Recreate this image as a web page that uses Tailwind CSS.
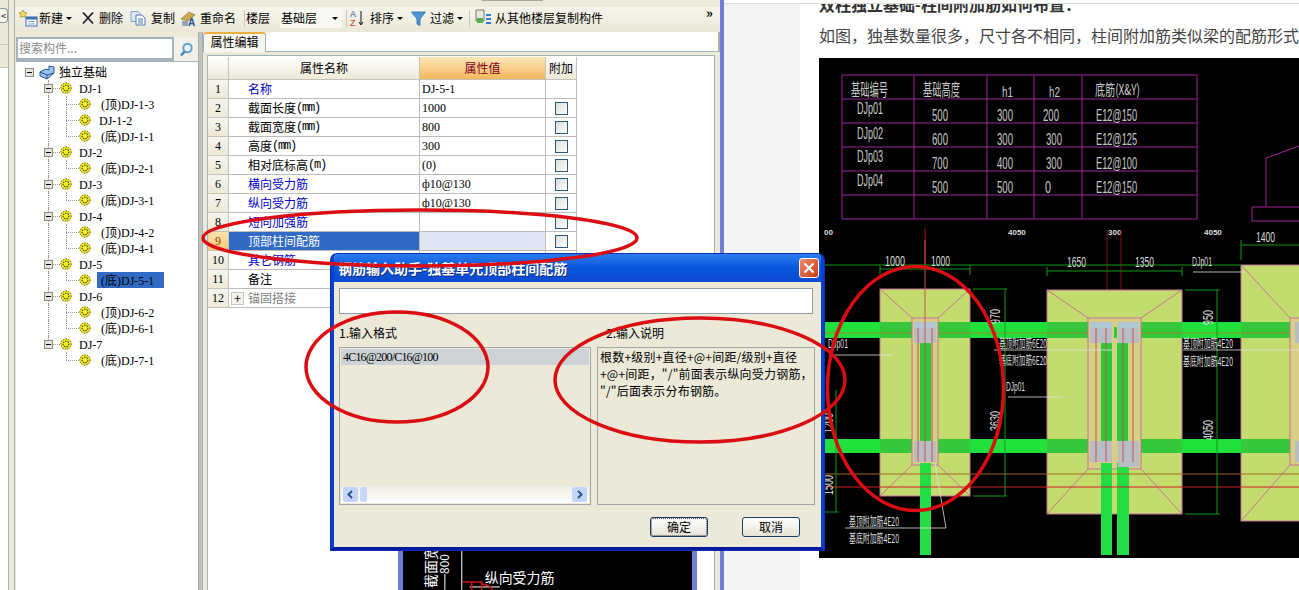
<!DOCTYPE html>
<html lang="zh-CN">

<head>
    <meta charset="UTF-8">
    <title>钢筋输入助手</title>
    <script src="https://cdn.jsdelivr.net/npm/@tailwindcss/browser@4"></script>
</head>

<body>
    <svg width="0" height="0" class="absolute">
        <symbol id="gear" viewBox="0 0 12 12">
            <circle cx="6" cy="6" r="5.500" fill="#f4ec1e" />
            <circle cx="6" cy="6" r="5.200" fill="none" stroke="#55501a" stroke-width="1" stroke-dasharray="1.300 1.300" />
            <circle cx="6" cy="6" r="2.900" fill="none" stroke="#4a4618" stroke-width="1.100" stroke-dasharray="1.500 1" />
        </symbol>
    </svg>

    <div class="relative flex h-[590px] w-[1299px] overflow-hidden bg-white text-[12px] leading-4 text-black font-['Noto_Sans_CJK_SC','Liberation_Sans',sans-serif]">

        <!-- app window -->
        <div class="flex h-full w-[724px] shrink-0 border-r-4 border-[#6d80d6] bg-[#ece9d8]">
            <!-- left rail -->
            <div class="flex w-[15px] shrink-0">
                <div class="flex w-[9px] flex-col border-r border-[#a5aeb4]">
                    <div class="h-[8px]"></div>
                    <div class="flex h-[15px] items-center justify-center rounded-r-sm border border-l-0 border-[#8b9aa3] bg-[#f5f3ea] text-[9px]">&lt;</div>
                    <div class="h-[22px] border-b border-[#c9c6b6]"></div>
                    <div class="h-[23px] border-b border-[#c9c6b6]"></div>
                    <div class="flex-1 bg-white"></div>
                </div>
                <div class="flex-1 border-r border-[#a5aeb4]"></div>
            </div>

            <!-- main column -->
            <div class="flex min-w-0 flex-1 flex-col">
                <div class="relative h-[7px] shrink-0">
                    <div class="absolute left-[467px] top-0 h-px w-[61px] bg-[#a8a698]"></div>
                </div>

                <!-- toolbar -->
                <div class="relative flex h-[25px] shrink-0 items-center bg-gradient-to-b from-[#f7f5ec] to-[#ebe8d8] pb-[3px] pl-[2px]">
                    <svg class="ml-[1px] h-[18px] w-[20px]" viewBox="0 0 20 18">
                        <path d="M5 1l1.300 2.400L9 4 7 6l.5 2.500L5 7.300 2.500 8.500 3 6 1 4l2.700-.6z" fill="#f5df5c" stroke="#a08c2c" stroke-width=".8" />
                        <rect x="8" y="8" width="11" height="9" fill="#fff" stroke="#3d6fb5" />
                        <rect x="8" y="8" width="11" height="2.500" fill="#3d6fb5" />
                        <path d="M10 12.500h7M10 15h7" stroke="#7ea3d4" />
                    </svg>
                    <span class="ml-[1px] w-[24px]">新建</span>
                    <span class="ml-[3px] mt-[1px] h-0 w-0 border-x-[3px] border-t-[3px] border-x-transparent border-t-black"></span>
                    <svg class="ml-[9px] h-[14px] w-[14px]" viewBox="0 0 14 14">
                        <path d="M2 1.500l10 11M12 1.500l-10 11" stroke="#222" stroke-width="1.800" />
                    </svg>
                    <span class="ml-[4px] w-[24px]">删除</span>
                    <svg class="ml-[7px] h-[16px] w-[16px]" viewBox="0 0 16 16">
                        <path d="M1 1.500h7l2 2v8H1z" fill="#dfe9f7" stroke="#7c9fce" />
                        <path d="M6 5h6l3 3v7H6z" fill="#fff" stroke="#4c78b6" />
                        <path d="M8 9h5M8 11h5M8 13h5" stroke="#4c78b6" />
                    </svg>
                    <span class="ml-[5px] w-[24px]">复制</span>
                    <svg class="ml-[5px] h-[17px] w-[17px]" viewBox="0 0 17 17">
                        <path d="M1 9l8-7 6 3-7 6z" fill="#c9a94a" stroke="#7e7a58" stroke-width=".7" />
                        <path d="M2 11h6v5H2z" fill="#8fa5bb" />
                        <text x="8" y="16" font-size="10" font-weight="700" fill="#1f4e96" class="font-['Liberation_Sans']">A</text>
                    </svg>
                    <span class="ml-[3px] w-[36px]">重命名</span>
                    <span class="ml-[8px] h-[17px] w-px bg-[#c9c6b6]"></span>
                    <span class="ml-[1px] w-[24px]">楼层</span>
                    <div class="ml-[10px] flex h-[20px] w-[62px] items-center bg-[#f9f8f2] pl-[1px]">
                        <span class="w-[36px]">基础层</span>
                        <span class="ml-[15px] mt-[1px] h-0 w-0 border-x-[3px] border-t-[3px] border-x-transparent border-t-black"></span>
                    </div>
                    <span class="ml-[4px] h-[17px] w-px bg-[#c9c6b6]"></span>
                    <svg class="ml-[3px] h-[18px] w-[15px]" viewBox="0 0 15 18">
                        <text x="0" y="8" font-size="9" fill="#2a55a8" class="font-['Liberation_Sans']">A</text>
                        <text x="0" y="17" font-size="9" fill="#c8392b" class="font-['Liberation_Sans']">Z</text>
                        <path d="M11 2v13M9 13l2 3 2-3" stroke="#111" fill="none" />
                    </svg>
                    <span class="ml-[5px] w-[24px]">排序</span>
                    <span class="ml-[3px] mt-[1px] h-0 w-0 border-x-[3px] border-t-[3px] border-x-transparent border-t-black"></span>
                    <svg class="ml-[8px] h-[15px] w-[15px]" viewBox="0 0 15 15">
                        <path d="M.5 1h14L9 8v6.500L6 13V8z" fill="#4f96d8" stroke="#2c6aa8" stroke-width=".8" />
                    </svg>
                    <span class="ml-[4px] w-[24px]">过滤</span>
                    <span class="ml-[3px] mt-[1px] h-0 w-0 border-x-[3px] border-t-[3px] border-x-transparent border-t-black"></span>
                    <span class="ml-[6px] h-[17px] w-px bg-[#c9c6b6]"></span>
                    <svg class="ml-[5px] h-[18px] w-[17px]" viewBox="0 0 17 18">
                        <path d="M1 1h8v11H1z" fill="#e9e7d8" stroke="#777" />
                        <path d="M2 9h6v5H2z" fill="#4fb54f" />
                        <path d="M11 5h5v2h-5zM11 9h5v2h-5zM11 13h5v2h-5z" fill="#2f7fd0" />
                    </svg>
                    <span class="ml-[3px]">从其他楼层复制构件</span>
                    <span class="absolute left-[691px] -top-[2px] text-[13px] font-bold leading-4">»</span>
                </div>

                <!-- panels -->
                <div class="flex min-h-0 flex-1">
                    <!-- tree column -->
                    <div class="flex w-[183px] shrink-0 flex-col pl-px pt-[5px]">
                        <div class="flex h-[24px] shrink-0">
                            <div class="flex w-[158px] items-center border-2 border-b-[3px] border-[#a3b3bd] bg-white pb-[2px] pl-[1px] text-[#8b8b8b]">搜索构件...</div>
                            <div class="flex flex-1 items-center justify-center bg-[#f3f1e7]">
                                <svg class="h-[15px] w-[15px]" viewBox="0 0 15 15">
                                    <circle cx="8.500" cy="6" r="4.200" fill="#eef6fc" stroke="#5da0d4" stroke-width="2" />
                                    <path d="M5.500 9.500L2 13.500" stroke="#3f83bb" stroke-width="2.500" />
                                </svg>
                            </div>
                        </div>
                        <div id="tree" class="min-h-0 flex-1 border-t border-[#a3b3bd] bg-white pt-[2px]"></div>
                    </div>
                    <!-- splitter -->
                    <div class="w-[5px] shrink-0 border-x border-[#a5aeb4] bg-[#bfc3bd]"></div>

                    <!-- property column -->
                    <div class="flex min-w-0 flex-1 flex-col">
                        <div class="flex h-[20px] shrink-0 bg-white">
                            <div class="flex h-[20px] w-[63px] items-center justify-center rounded-t-[3px] border border-b-0 border-x-[#a3b3bd] border-t-2 border-t-[#f0b040] bg-[#f6f5ee] pb-[2px]">属性编辑</div>
                            <div class="flex-1 border-b border-r-2 border-[#a3b3bd] border-r-[#aeb0a6]"></div>
                        </div>
                        <div class="flex min-h-0 flex-1 pl-[4px] pr-[5px]">
                            <div class="mt-[3px] flex-1 border border-b-0 border-x-[#9fb0bb] border-t-[#9fb0bb] bg-white pt-px">
                                <div id="grid" class="grid w-[369px] grid-cols-[21px_191px_126px_31px]"></div>
                            </div>
                        </div>
                    </div>
                </div>
            </div>
        </div>

        <!-- gutter -->
        <div class="flex w-[76px] shrink-0 flex-col bg-[#f1f3f4]">
            <div class="h-[3px] bg-white"></div>
            <div class="h-px bg-[#dddddd]"></div>
        </div>

        <!-- article -->
        <div class="flex min-w-0 flex-1 flex-col">
            <div class="h-[3px] shrink-0"></div>
            <div class="h-px shrink-0 bg-[#dddddd]"></div>
            <div class="h-[19px] shrink-0 overflow-hidden pl-[19px]">
                <div class="-mt-[8px] whitespace-nowrap text-[16px] font-bold leading-4 text-[#333]">双柱独立基础-柱间附加筋如何布置：</div>
            </div>
            <div class="h-[24px] shrink-0 whitespace-nowrap pl-[19px] text-[16px] leading-6 text-[#444]">如图，独基数量很多，尺寸各不相同，柱间附加筋类似梁的配筋形式</div>
            <div class="mt-[11px] pl-[19px]">
                <!-- the CAD drawing is a raster in the original, drawn here in page coordinates -->
                <svg class="block h-[500px] w-[480px] bg-black font-['Liberation_Sans','Noto_Sans_CJK_SC',sans-serif]" viewBox="819 58 480 500">
                    <g fill="none" stroke="#a0209a">
                        <path d="M842 75h355M842 99h355M842 123h355M842 147h355M842 171h355M842 195h355M842 219h355" />
                        <path d="M842 75v144M914 75v144M987 75v144M1034 75v144M1082 75v144M1197 75v144" />
                    </g>
                    <g fill="#c8c8c8" font-size="16">
                        <text x="851" y="96" font-size="17" textLength="37" lengthAdjust="spacingAndGlyphs" class="font-['Noto_Sans_CJK_SC']">基础编号</text>
                        <text x="923" y="96" font-size="17" textLength="37" lengthAdjust="spacingAndGlyphs" class="font-['Noto_Sans_CJK_SC']">基础高度</text>
                        <text x="1002" y="97" font-size="14" textLength="11" lengthAdjust="spacingAndGlyphs">h1</text>
                        <text x="1049" y="97" font-size="14" textLength="11" lengthAdjust="spacingAndGlyphs">h2</text>
                        <text x="1095" y="95" font-size="15" textLength="45" lengthAdjust="spacingAndGlyphs" class="font-['Noto_Sans_CJK_SC']">底筋(X&amp;Y)</text>
                        <text x="857" y="114" textLength="26" lengthAdjust="spacingAndGlyphs">DJp01</text>
                        <text x="857" y="139" textLength="26" lengthAdjust="spacingAndGlyphs">DJp02</text>
                        <text x="857" y="162" textLength="26" lengthAdjust="spacingAndGlyphs">DJp03</text>
                        <text x="857" y="186" textLength="26" lengthAdjust="spacingAndGlyphs">DJp04</text>
                        <text x="932" y="121" textLength="16" lengthAdjust="spacingAndGlyphs">500</text>
                        <text x="932" y="145" textLength="16" lengthAdjust="spacingAndGlyphs">600</text>
                        <text x="932" y="169" textLength="16" lengthAdjust="spacingAndGlyphs">700</text>
                        <text x="932" y="193" textLength="16" lengthAdjust="spacingAndGlyphs">500</text>
                        <text x="997" y="121" textLength="16" lengthAdjust="spacingAndGlyphs">300</text>
                        <text x="997" y="145" textLength="16" lengthAdjust="spacingAndGlyphs">300</text>
                        <text x="997" y="169" textLength="16" lengthAdjust="spacingAndGlyphs">400</text>
                        <text x="997" y="193" textLength="16" lengthAdjust="spacingAndGlyphs">500</text>
                        <text x="1043" y="121" textLength="16" lengthAdjust="spacingAndGlyphs">200</text>
                        <text x="1046" y="145" textLength="16" lengthAdjust="spacingAndGlyphs">300</text>
                        <text x="1046" y="169" textLength="16" lengthAdjust="spacingAndGlyphs">300</text>
                        <text x="1045" y="193" textLength="6" lengthAdjust="spacingAndGlyphs">0</text>
                        <text x="1096" y="121" textLength="41" lengthAdjust="spacingAndGlyphs">E12@150</text>
                        <text x="1096" y="145" textLength="41" lengthAdjust="spacingAndGlyphs">E12@125</text>
                        <text x="1096" y="169" textLength="41" lengthAdjust="spacingAndGlyphs">E12@100</text>
                        <text x="1096" y="193" textLength="41" lengthAdjust="spacingAndGlyphs">E12@150</text>
                    </g>

                    <!-- elevation top right -->
                    <path d="M1299 146l-33 12v48M1299 207h-47v14h47" fill="none" stroke="#a0209a" />

                    <!-- dimension row -->
                    <g fill="#dddddd" font-size="8" font-weight="700">
                        <text x="824" y="235">00</text>
                        <text x="1008" y="235">4050</text>
                        <text x="1108" y="235">300</text>
                        <text x="1204" y="235">4050</text>
                    </g>
                    <path d="M925 228v36" stroke="#b01020" />
                    <path d="M1107 230v90" stroke="#7a1410" />
                    <path d="M1121 230v90" stroke="#7a1410" />

                    <!-- footings -->
                    <g fill="#c3dc6e" stroke="#c8709a">
                        <rect x="880" y="289" width="90" height="207" />
                        <rect x="1047" y="290" width="135" height="224" />
                        <rect x="1241" y="265" width="70" height="256" />
                    </g>

                    <!-- long bars -->
                    <rect x="825" y="322" width="474" height="16" fill="#22e03c" />
                    <rect x="825" y="439" width="474" height="14" fill="#22e03c" />
                    <g fill="#35c83c">
                        <rect x="880" y="322" width="90" height="16" />
                        <rect x="880" y="439" width="90" height="14" />
                        <rect x="1047" y="322" width="135" height="16" />
                        <rect x="1047" y="439" width="135" height="14" />
                        <rect x="1241" y="322" width="58" height="16" />
                        <rect x="1241" y="439" width="58" height="14" />
                    </g>
                    <path d="M825 333h474" stroke="#8a9020" />

                    <!-- pedestals -->
                    <g fill="#d6cf84" stroke="#c8709a">
                        <rect x="912" y="318" width="26" height="147" />
                        <rect x="1088" y="318" width="53" height="151" />
                        <rect x="1290" y="318" width="20" height="147" />
                    </g>
                    <path d="M880 289l32 29M970 289l-32 29M880 496l32-31M970 496l-32-31M1047 290l41 28M1182 290l-41 28M1047 514l41-45M1182 514l-41-45M1241 265l49 53M1241 521l49-56" stroke="#c8709a" fill="none" />

                    <!-- column bars -->
                    <g fill="#2bc83a">
                        <rect x="920" y="343" width="11" height="98" />
                        <rect x="1101" y="343" width="11" height="98" />
                        <rect x="1117" y="343" width="11" height="98" />
                        <rect x="1114" y="327" width="3" height="11" />
                    </g>
                    <g fill="#22dd44">
                        <rect x="920" y="463" width="11" height="92" />
                        <rect x="1101" y="463" width="11" height="92" />
                        <rect x="1117" y="463" width="12" height="92" />
                    </g>

                    <!-- column sections -->
                    <g fill="#b8bcc4">
                        <rect x="914" y="322" width="22" height="21" />
                        <rect x="914" y="441" width="22" height="21" />
                        <rect x="1090" y="322" width="22" height="21" />
                        <rect x="1118" y="322" width="21" height="21" />
                        <rect x="1090" y="441" width="22" height="21" />
                        <rect x="1118" y="441" width="21" height="26" />
                        <rect x="1295" y="322" width="4" height="21" />
                        <rect x="1295" y="441" width="4" height="21" />
                    </g>
                    <g fill="#b0c8d4">
                        <rect x="914" y="323" width="22" height="5" />
                        <rect x="1090" y="323" width="22" height="5" />
                        <rect x="1118" y="323" width="21" height="5" />
                    </g>
                    <path d="M918 328v134M925 240v222M932 328v134M1096 328v134M1106 328v134M1123 328v134M1133 328v134" stroke="#c85050" fill="none" />

                    <!-- axis lines -->
                    <path d="M825 474h474" stroke="#a06a20" />
                    <path d="M825 487h474" stroke="#d02020" />

                    <!-- dimensions -->
                    <g fill="none" stroke="#0f9a14">
                        <path d="M825 265h416M880 269h90M880 265v10M970 265v10" />
                        <path d="M1047 271h135M1047 267v9M1182 267v9" />
                        <path d="M1241 245h58M1241 240v20" />
                        <path d="M973 289h34M973 496h34M1005 289v207" />
                        <path d="M1185 290h35M1185 514h35M1217 290v224" />
                        <path d="M836 390v122M825 512h14" />
                    </g>

                    <g fill="#dcdcdc" font-size="15">
                        <text x="885" y="266" textLength="20" lengthAdjust="spacingAndGlyphs">1000</text>
                        <text x="931" y="266" textLength="19" lengthAdjust="spacingAndGlyphs">1000</text>
                        <text x="1067" y="267" textLength="19" lengthAdjust="spacingAndGlyphs">1650</text>
                        <text x="1135" y="267" textLength="19" lengthAdjust="spacingAndGlyphs">1350</text>
                        <text x="1256" y="242" textLength="19" lengthAdjust="spacingAndGlyphs">1400</text>
                        <text x="1192" y="266" font-size="12" textLength="20" lengthAdjust="spacingAndGlyphs">DJp01</text>
                        <text x="828" y="348" font-size="12" textLength="20" lengthAdjust="spacingAndGlyphs">DJp01</text>
                        <text x="1006" y="391" font-size="12" textLength="19" lengthAdjust="spacingAndGlyphs">DJp01</text>
                        <text transform="translate(1000 324) rotate(-90)" textLength="15" lengthAdjust="spacingAndGlyphs">970</text>
                        <text transform="translate(1213 325) rotate(-90)" textLength="15" lengthAdjust="spacingAndGlyphs">950</text>
                        <text transform="translate(1000 431) rotate(-90)" textLength="20" lengthAdjust="spacingAndGlyphs">3630</text>
                        <text transform="translate(1213 440) rotate(-90)" textLength="20" lengthAdjust="spacingAndGlyphs">4050</text>
                        <text transform="translate(833 433) rotate(-90)" textLength="20" lengthAdjust="spacingAndGlyphs">1200</text>
                        <text transform="translate(833 495) rotate(-90)" textLength="20" lengthAdjust="spacingAndGlyphs">1500</text>
                    </g>
                    <g fill="#dcdcdc" font-size="12" class="font-['Noto_Sans_CJK_SC']">
                        <text x="999" y="348" textLength="48" lengthAdjust="spacingAndGlyphs">基顶附加筋6E20</text>
                        <text x="999" y="365" textLength="48" lengthAdjust="spacingAndGlyphs">基底附加筋6E20</text>
                        <text x="1183" y="348" textLength="50" lengthAdjust="spacingAndGlyphs">基顶附加筋4E20</text>
                        <text x="1183" y="366" textLength="50" lengthAdjust="spacingAndGlyphs">基底附加筋4E20</text>
                        <text x="849" y="526" textLength="50" lengthAdjust="spacingAndGlyphs">基顶附加筋4E20</text>
                        <text x="849" y="543" textLength="50" lengthAdjust="spacingAndGlyphs">基底附加筋4E20</text>
                    </g>
                    <path d="M833 355h60M1008 397h54M1193 272h52M994 350h118M1183 350h116M845 528h101L935 463" stroke="#e2e2e2" stroke-width=".8" fill="none" />
                </svg>
            </div>
        </div>

        <!-- drawing window behind the dialog -->
        <div class="absolute left-[398px] top-[548px] h-[42px] w-[299px] border-x-[5px] border-[#6d80d6] bg-black">
            <svg class="h-full w-full font-['Noto_Sans_CJK_SC',sans-serif]" viewBox="403 548 290 42">
                <text transform="translate(436 588) rotate(-90)" fill="#fff" font-size="14">截面宽度</text>
                <text transform="translate(449 574) rotate(-90)" fill="#fff" font-size="12">800</text>
                <path d="M445 574v16M462 548v42M470 587h30" stroke="#fff" fill="none" />
                <text x="485" y="583" fill="#fff" font-size="14">纵向受力筋</text>
                <path d="M463 582h19v8M472 582v8M482 584q9 1 11 6" stroke="#d81010" stroke-width="1.500" fill="none" />
            </svg>
        </div>

        <!-- dialog -->
        <div class="absolute left-[331px] top-[254px] flex h-[296px] w-[493px] flex-col overflow-hidden rounded-t-[6px] border-x-[3px] border-b-[3px] border-x-[#0a3fd0] border-b-[#00189c] bg-[#ece9d8] shadow-[0_0_0_1px_#0b2fb0]">
            <div class="flex h-[28px] shrink-0 items-center justify-between bg-gradient-to-b from-[#2a7cf0] via-[#0a57dc] to-[#0b4ad0] pl-[4px] pr-[2px] text-[14px] font-bold text-white [text-shadow:1px_1px_0_#0a2a80]">
                <span>钢筋输入助手-独基单元顶部柱间配筋</span>
                <div class="flex h-[20px] w-[20px] items-center justify-center rounded-[3px] border border-white bg-gradient-to-br from-[#ef8a68] to-[#c93a10]">
                    <svg class="h-[12px] w-[12px]" viewBox="0 0 12 12">
                        <path d="M1.500 1.500l9 9M10.500 1.500l-9 9" stroke="#fff" stroke-width="2.200" />
                    </svg>
                </div>
            </div>
            <div class="flex flex-1 flex-col pl-[5px]">
                <div class="mt-[6px] h-[26px] w-[474px] shrink-0 border border-[#8e9ea8] bg-white"></div>
                <div class="mt-[11px] flex h-[16px] shrink-0">
                    <span class="w-[267px]">1.输入格式</span>
                    <span>2.输入说明</span>
                </div>
                <div class="mt-[6px] flex h-[158px] shrink-0 gap-[6px]">
                    <div class="flex w-[252px] flex-col border border-[#a0a6a8] p-px">
                        <div class="h-[16px] bg-[#cdd2d6] pl-[2px] leading-[14px]"><span class="font-['Liberation_Serif'] tracking-[-0.8px]">4C16@200/C16@100</span></div>
                        <div class="flex-1"></div>
                        <div class="flex h-[17px] items-center bg-gradient-to-b from-[#eeece2] to-white pl-[2px] pr-[2px]">
                            <div class="flex h-[15px] w-[15px] items-center justify-center rounded-[2px] bg-[#c3d5fb] text-[#3c5a96]">
                                <svg class="h-[9px] w-[9px]" viewBox="0 0 9 9"><path d="M6 1L2.500 4.500 6 8" fill="none" stroke="#2f4e8c" stroke-width="2" /></svg>
                            </div>
                            <div class="ml-[2px] h-[15px] w-[7px] rounded-[2px] bg-[#c8d8f8]"></div>
                            <div class="flex-1"></div>
                            <div class="flex h-[15px] w-[15px] items-center justify-center rounded-[2px] bg-[#c3d5fb]">
                                <svg class="h-[9px] w-[9px]" viewBox="0 0 9 9"><path d="M3 1l3.500 3.500L3 8" fill="none" stroke="#2f4e8c" stroke-width="2" /></svg>
                            </div>
                        </div>
                    </div>
                    <div class="w-[218px] border border-[#a0a6a8] pl-[2px] leading-[17px] tracking-[0.2px]">
                        根数+级别+直径+@+间距/级别+直径<br>+@+间距，"/"前面表示纵向受力钢筋，<br>"/"后面表示分布钢筋。
                    </div>
                </div>
                <div class="mt-[12px] flex h-[20px] shrink-0 justify-end gap-[34px] pr-[21px]">
                    <button class="h-[20px] w-[58px] rounded-[3px] border border-[#1d3a6c] bg-gradient-to-b from-white to-[#e6e3d6] outline-1 -outline-offset-2 outline-dotted outline-[#555]">确定</button>
                    <button class="h-[20px] w-[58px] rounded-[3px] border border-[#1d3a6c] bg-gradient-to-b from-white to-[#e6e3d6]">取消</button>
                </div>
            </div>
        </div>

        <!-- hand drawn red marks -->
        <svg class="pointer-events-none absolute left-0 top-0 h-[590px] w-[1299px]" viewBox="0 0 1299 590" fill="none" stroke="#dc0d12" stroke-width="3.500">
            <ellipse cx="420" cy="238" rx="217" ry="28" />
            <ellipse cx="397" cy="367" rx="91" ry="55" />
            <ellipse cx="700" cy="380" rx="145" ry="62" />
            <ellipse cx="915.500" cy="388.500" rx="88" ry="122" />
        </svg>
    </div>

    <script>
        const BLUE = 'text-[#0000c8]';
        const BLACK = 'text-black';
        const GRAY = 'text-[#808080]';

        // latin runs: the original bitmap font is 6px wide per char, Times digits match it
        function lat(s) {
            return s.replace(/[\x21-\x7eф]+/g, (m) => m.includes('m')
                ? `<span class="font-['Liberation_Mono'] tracking-[-1.2px]">${m}</span>`
                : `<span class="font-['Liberation_Serif']">${m}</span>`);
        }

        const rows = [
            ['名称', BLUE, 'DJ-5-1', false],
            ['截面长度(mm)', BLACK, '1000', true],
            ['截面宽度(mm)', BLACK, '800', true],
            ['高度(mm)', BLACK, '300', true],
            ['相对底标高(m)', BLACK, ' (0)', true],
            ['横向受力筋', BLUE, ' ф10@130', true],
            ['纵向受力筋', BLUE, ' ф10@130', true],
            ['短向加强筋', BLUE, '', true],
            ['顶部柱间配筋', 'text-white', '', true],
            ['其它钢筋', BLUE, '', true],
            ['备注', BLACK, '', false],
            ['锚固搭接', GRAY, '', false],
        ];

        const headCell = 'flex h-[23px] items-center justify-center border-b border-r border-[#c4c4bc] bg-gradient-to-b from-white to-[#ece9d8]';
        let gridHtml = `
            <div class="${headCell}"></div>
            <div class="${headCell}">属性名称</div>
            <div class="flex h-[23px] items-center justify-center border-b border-r border-[#c4c4bc] bg-gradient-to-b from-[#fbe6b8] to-[#f2b75a] text-[#800020]">属性值</div>
            <div class="${headCell}">附加</div>`;

        rows.forEach((r, i) => {
            const sel = i === 8;
            const idxBg = sel ? 'bg-gradient-to-b from-[#ffe2ad] to-[#fbc879]' : 'bg-gradient-to-b from-[#f6f5ee] to-[#ece9d8]';
            const nameBg = sel ? 'bg-[#316ac5]' : 'bg-white';
            const valBg = sel ? 'bg-[#dfe7f5]' : 'bg-white';
            const plus = i === 11
                ? `<span class="ml-[2px] mr-[4px] flex h-[13px] w-[13px] items-center justify-center border border-[#c8c8c0] bg-[#f4f3ea] text-black">+</span>`
                : `<span class="w-[19px]"></span>`;
            const box = r[3]
                ? `<span class="h-[13px] w-[13px] border border-[#2a5a80] bg-gradient-to-br from-[#dcdcd6] to-white"></span>`
                : '';
            gridHtml += `
            <div class="flex h-[19px] items-center justify-center border-b border-r border-[#c4c4bc] ${idxBg} ${sel ? 'text-[#8a4a00]' : ''}">${lat(String(i + 1))}</div>
            <div class="flex h-[19px] items-center border-b border-r border-[#bcbcbc] ${nameBg} ${r[1]}">${plus}${lat(r[0])}</div>
            <div class="flex h-[19px] items-center whitespace-pre border-b border-r border-[#bcbcbc] pl-[2px] ${valBg}">${lat(r[2])}</div>
            <div class="flex h-[19px] items-center justify-center border-b border-r border-[#bcbcbc] bg-white">${box}</div>`;
        });
        document.getElementById('grid').innerHTML = gridHtml;

        const tree = [
            ['DJ-1', ['(顶)DJ-1-3', 'DJ-1-2', '(底)DJ-1-1']],
            ['DJ-2', ['(底)DJ-2-1']],
            ['DJ-3', ['(底)DJ-3-1']],
            ['DJ-4', ['(顶)DJ-4-2', '(底)DJ-4-1']],
            ['DJ-5', ['(底)DJ-5-1']],
            ['DJ-6', ['(顶)DJ-6-2', '(底)DJ-6-1']],
            ['DJ-7', ['(底)DJ-7-1']],
        ];

        const minusBox = `<span class="flex h-[9px] w-[9px] items-center justify-center border border-[#8e8e86] bg-[#e6e4da]"><span class="h-px w-[5px] bg-black"></span></span>`;
        const gear = `<svg class="h-[12px] w-[12px]"><use href="#gear" /></svg>`;

        let treeHtml = `
            <div class="flex h-[16px] items-center pl-[9px]">
                ${minusBox}
                <svg class="ml-[5px] h-[17px] w-[17px]" viewBox="0 0 17 17">
                    <path d="M1 8l6-3 3 1V2l5 1v6l-7 6-7-3z" fill="#9dc4ee" stroke="#23508e" />
                    <path d="M1 8l7 3 7-2M8 11v4" fill="none" stroke="#23508e" />
                </svg>
                <span class="ml-[3px]">独立基础</span>
            </div>`;

        tree.forEach((group, g) => {
            const lastGroup = g === tree.length - 1;
            treeHtml += `
            <div class="relative flex h-[16px] items-center pl-[28px]">
                <span class="absolute left-[32px] ${lastGroup ? 'top-0 h-[8px]' : 'top-0 h-full'} w-0 border-l border-dotted border-[#9a9a9a]"></span>
                <span class="relative">${minusBox}</span>
                <span class="w-[7px] border-t border-dotted border-[#9a9a9a]"></span>
                ${gear}
                <span class="ml-[7px]">${lat(group[0])}</span>
            </div>`;
            group[1].forEach((child, c) => {
                const lastChild = c === group[1].length - 1;
                const sel = child === '(底)DJ-5-1';
                treeHtml += `
            <div class="relative flex h-[16px] items-center pl-[50px]">
                ${lastGroup ? '' : `<span class="absolute left-[32px] top-0 h-full w-0 border-l border-dotted border-[#9a9a9a]"></span>`}
                <span class="absolute left-[50px] top-0 ${lastChild ? 'h-[8px]' : 'h-full'} w-0 border-l border-dotted border-[#9a9a9a]"></span>
                <span class="w-[13px] border-t border-dotted border-[#9a9a9a]"></span>
                ${gear}
                <span class="ml-[6px] h-[16px] w-[67px] ${child.startsWith('(') ? 'pl-[4px]' : 'pl-[2px]'} ${sel ? 'bg-[#316ac5]' : ''}">${lat(child)}</span>
            </div>`;
            });
        });
        document.getElementById('tree').innerHTML = treeHtml;
    </script>
</body>

</html>
